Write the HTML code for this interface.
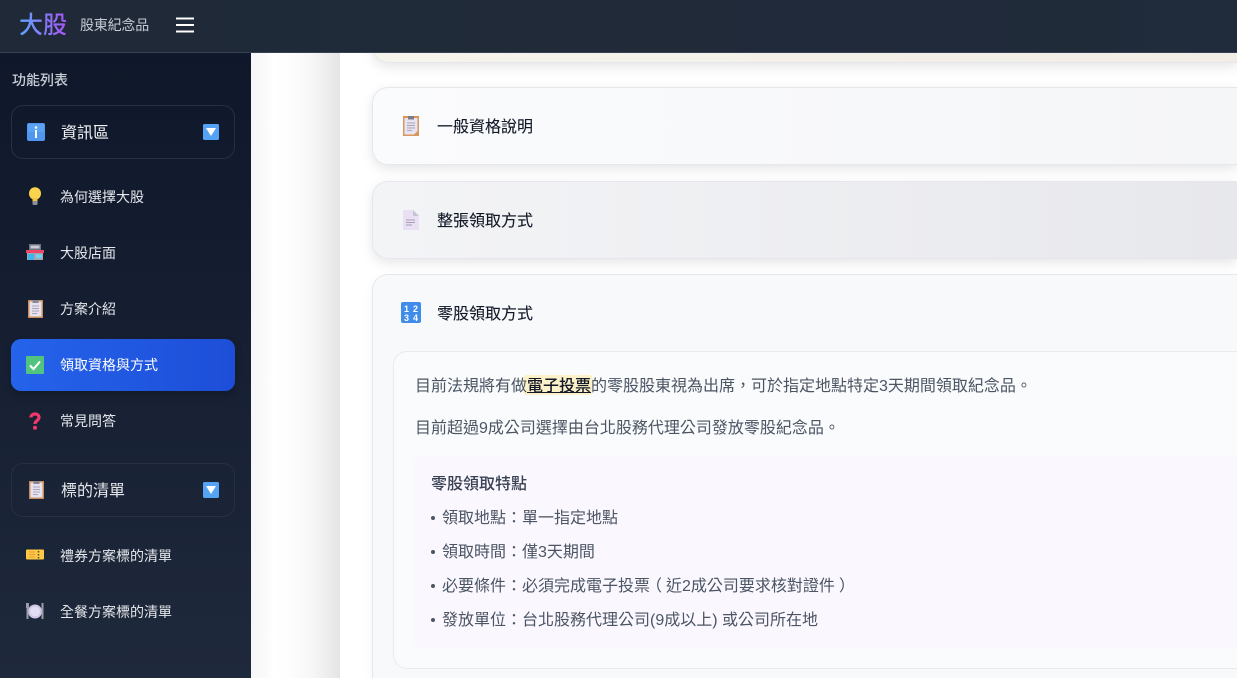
<!DOCTYPE html>
<html lang="zh-Hant"><head><meta charset="utf-8"><title>大股 股東紀念品</title>
<style>
*{box-sizing:border-box;margin:0;padding:0}
html,body{width:1237px;height:678px;overflow:hidden;background:#fff}
body{position:relative;font-family:"Liberation Sans","Noto Sans CJK TC",sans-serif}
.abs,.t,svg.i{position:absolute}
.t{white-space:nowrap;line-height:24px}
#hdr{position:absolute;left:0;top:0;width:1237px;height:53px;background:linear-gradient(90deg,#1f2937,#202b3b);border-bottom:1px solid #374151;z-index:5}
#side{position:absolute;left:0;top:53px;width:251px;height:625px;background:linear-gradient(180deg,#0f172a,#1e293b)}
#gut{position:absolute;left:251px;top:53px;width:89px;height:625px;background:linear-gradient(90deg,#f5f6f7 0,#fbfbfc 18%,#fff 25%,#fdfdfd 45%,#f6f6f7 70%,#ebebec 90%,#e4e4e5 100%)}
#main{position:absolute;left:340px;top:53px;width:897px;height:625px;background:#fff}
.card{position:absolute;left:372px;width:865px;border:1px solid #e5e7eb;border-right:0;border-radius:16px 0 0 16px}
.sh{box-shadow:0 4px 12px rgba(0,0,0,.1)}
.group{position:absolute;left:11px;width:224px;height:54px;border:1px solid #263042;border-radius:12px}
.nav{color:#e5e7eb;font-size:14px;left:60px}
.title{color:#111827;font-size:16px;left:437px;-webkit-text-stroke:.1px #111827}
.body{color:#4b5563;font-size:16px}
.dot{position:absolute;left:431px;width:4px;height:4px;border-radius:50%;background:#4b5563}
.pl{position:relative;left:-4px}.pr{position:relative;left:4px}
</style></head><body>
<div id="main"></div><div id="gut"></div><div id="side"></div>
<div id="hdr"></div>

<!-- header -->
<div class="t" style="left:19px;top:9px;z-index:6;font-size:24px;line-height:34px;font-weight:500;background:linear-gradient(90deg,#60a5fa,#a855f7);-webkit-background-clip:text;background-clip:text;color:transparent">大股</div>
<div class="t" style="left:80px;top:13px;z-index:6;font-size:14px;letter-spacing:-.2px;color:#c5cad3">股東紀念品</div>
<svg class="i" style="left:176px;top:17px;z-index:6" width="19" height="16"><path d="M0 1.5H18M0 8H18M0 14.5H18" stroke="#fff" stroke-width="2"/></svg>

<!-- sidebar -->
<div class="t" style="left:12px;top:68px;font-size:14px;color:#c9ced6;font-weight:500">功能列表</div>
<div class="group" style="top:105px"></div>
<svg class="i" style="left:27px;top:123px" width="18" height="18"><rect width="18" height="18" rx="2" fill="#4f97ee"/><rect x="1" y="1" width="16" height="8" rx="1" fill="#5aa3f3"/><circle cx="9" cy="4.5" r="1.3" fill="#fff"/><rect x="8" y="7" width="2" height="8" fill="#fff"/></svg>
<div class="t" style="left:61px;top:122px;font-size:16px;color:#f3f4f6">資訊區</div>
<svg class="i" style="left:203px;top:124px" width="16" height="16"><rect width="16" height="16" rx="1.5" fill="#55a3f5"/><path d="M3 4H13L8 12Z" fill="#fff"/></svg>

<svg class="i" style="left:28px;top:187px" width="14" height="19"><ellipse cx="7" cy="6.5" rx="6" ry="6.3" fill="#fcd34d"/><path d="M4.5 11H9.5V15H4.5Z" fill="#f3c343"/><rect x="4.5" y="14" width="5" height="4" rx="1" fill="#8b8f99"/></svg>
<div class="t nav" style="top:185px">為何選擇大股</div>

<svg class="i" style="left:26px;top:244px" width="18" height="16"><rect x="3" y="0" width="12" height="6" fill="#6b7280"/><rect x="4.5" y="1.5" width="9" height="3" fill="#c9ccd3"/><rect x="1" y="6" width="16" height="10" fill="#a1a5b3"/><rect y="6" width="18" height="3" fill="#ee4467"/><rect x="2" y="10" width="6" height="6" fill="#3db4ea"/><rect x="10" y="10.5" width="6" height="3.5" fill="#6ed3f0"/></svg>
<div class="t nav" style="top:241px">大股店面</div>

<svg class="i" style="left:28px;top:300px" width="15" height="18"><use href="#clip"/></svg>
<div class="t nav" style="top:297px">方案介紹</div>

<div class="abs" style="left:11px;top:339px;width:224px;height:52px;border-radius:10px;background:linear-gradient(90deg,#2563eb,#1d4ed8);box-shadow:0 4px 8px rgba(0,0,0,.2)"></div>
<svg class="i" style="left:26px;top:356px" width="18" height="18"><rect width="18" height="18" rx="1" fill="#52c47f"/><path d="M4 9.5L7.5 13L14 5.5" fill="none" stroke="#fff" stroke-width="2"/></svg>
<div class="t nav" style="top:353px;color:#fff">領取資格與方式</div>

<svg class="i" style="left:29px;top:412px" width="12" height="18"><path d="M2 5.5C2 .8 10 .8 10 5.5C10 8.5 6 8.5 6 12" fill="none" stroke="#f0386b" stroke-width="3.2"/><circle cx="6" cy="15.7" r="2" fill="#f0386b"/></svg>
<div class="t nav" style="top:409px">常見問答</div>

<div class="group" style="top:463px"></div>
<svg class="i" style="left:29px;top:481px" width="15" height="18"><use href="#clip"/></svg>
<div class="t" style="left:61px;top:480px;font-size:16px;color:#e5e7eb">標的清單</div>
<svg class="i" style="left:203px;top:482px" width="16" height="16"><rect width="16" height="16" rx="1.5" fill="#55a3f5"/><path d="M3 4H13L8 12Z" fill="#fff"/></svg>

<svg class="i" style="left:26px;top:549px" width="18" height="11"><rect width="18" height="10" y=".5" rx="1" fill="#fbc944"/><path d="M3 3H9M3 5.5H9M3 8H9" stroke="#ef9a3c"/><path d="M12.5 2V3.5M12.5 5V6.5M12.5 8V9.5" stroke="#5b4a23" stroke-width="1.5"/></svg>
<div class="t nav" style="top:544px">禮券方案標的清單</div>

<svg class="i" style="left:26px;top:603px" width="18" height="17"><circle cx="9" cy="8.5" r="7" fill="#cfc6e8"/><circle cx="9" cy="8.5" r="5" fill="#e2dcf4"/><path d="M1.5 0V16M16.5 0V16" stroke="#9a9cab" stroke-width="2"/><path d="M0 0V5H3V0" fill="#9a9cab"/></svg>
<div class="t nav" style="top:600px">全餐方案標的清單</div>

<!-- cards -->
<div class="card sh" style="top:30px;height:33px;background:linear-gradient(90deg,#f6f3ec,#f1ede6)"></div>

<div class="card sh" style="top:87px;height:78px;background:linear-gradient(90deg,#fafbfd,#f5f6f8)"></div>
<svg class="i" style="left:403px;top:116px" width="16" height="20"><use href="#clip2"/></svg>
<div class="t title" style="top:116px">一般資格說明</div>

<div class="card sh" style="top:181px;height:78px;background:linear-gradient(90deg,#f3f4f6,#e7e8ec)"></div>
<svg class="i" style="left:403px;top:210px" width="16" height="20"><path d="M0 0H10L16 6V20H0Z" fill="#e9e1f3"/><path d="M10 0L16 6H10Z" fill="#c9c2d6"/><path d="M3 10H12M3 12.5H12M3 15H9" stroke="#a79cb8"/></svg>
<div class="t title" style="top:210px">整張領取方式</div>

<div class="card" style="top:274px;height:404px;border-bottom:0;border-radius:16px 0 0 0;background:#f8f9fb;box-shadow:0 4px 12px rgba(0,0,0,.04)"></div>
<svg class="i" style="left:401px;top:302px" width="20" height="21"><rect width="20" height="21" rx="2" fill="#3f8ceb"/><text x="5.5" y="10" font-size="9" font-weight="700" fill="#fff" text-anchor="middle" font-family="Liberation Sans">1</text><text x="14.5" y="10" font-size="9" font-weight="700" fill="#fff" text-anchor="middle" font-family="Liberation Sans">2</text><text x="5.5" y="19" font-size="9" font-weight="700" fill="#fff" text-anchor="middle" font-family="Liberation Sans">3</text><text x="14.5" y="19" font-size="9" font-weight="700" fill="#fff" text-anchor="middle" font-family="Liberation Sans">4</text></svg>
<div class="t title" style="top:303px">零股領取方式</div>

<div class="abs" style="left:393px;top:351px;width:844px;height:318px;border:1px solid #e8eaee;border-right:0;border-radius:14px 0 0 14px;background:#fafbfd"></div>

<div class="abs" style="left:523px;top:375px;width:70px;height:20px;border-radius:4px;background:#fdf1c9"></div>
<div class="t body" style="left:415px;top:375px">目前法規將有做<span style="color:#111827;font-weight:500;text-decoration:underline">電子投票</span>的零股股東視為出席，可於指定地點特定3天期間領取紀念品。</div>
<div class="t body" style="left:415px;top:417px">目前超過9成公司選擇由台北股務代理公司發放零股紀念品。</div>

<div class="abs" style="left:414px;top:456px;width:823px;height:192px;border-radius:8px 0 0 8px;background:#faf7ff"></div>
<div class="t" style="left:431px;top:473px;font-size:16px;color:#374151;font-weight:500">零股領取特點</div>
<div class="dot" style="top:516px"></div><div class="t body" style="left:442px;top:507px">領取地點：單一指定地點</div>
<div class="dot" style="top:550px"></div><div class="t body" style="left:442px;top:541px">領取時間：僅3天期間</div>
<div class="dot" style="top:584px"></div><div class="t body" style="left:442px;top:575px">必要條件：必須完成電子投票<span class="pl">（</span>近2成公司要求核對證件<span class="pr">）</span></div>
<div class="dot" style="top:618px"></div><div class="t body" style="left:442px;top:609px">發放單位：台北股務代理公司(9成以上) 或公司所在地</div>

<svg width="0" height="0" style="position:absolute"><defs>
<g id="clip"><rect width="15" height="18" fill="#c98d5b"/><rect x="1.5" y="1.5" width="12" height="15" fill="#e7e2f0"/><rect x="4.5" y="0" width="6" height="3" fill="#8a8795"/><path d="M4 6H11M4 8.5H11M4 11H11M4 13.5H9" stroke="#aaa6b8"/></g>
<g id="clip2"><rect width="16" height="20" fill="#d9975e"/><path d="M1.5 2H14.5V15L11 18.5H1.5Z" fill="#e8e3f0"/><rect x="5" y="0" width="6" height="3.5" fill="#7f7c8a"/><path d="M4 7H12M4 9.5H12M4 12H12M4 14.5H9" stroke="#a9a5b6"/></g>
</defs></svg>
</body></html>
